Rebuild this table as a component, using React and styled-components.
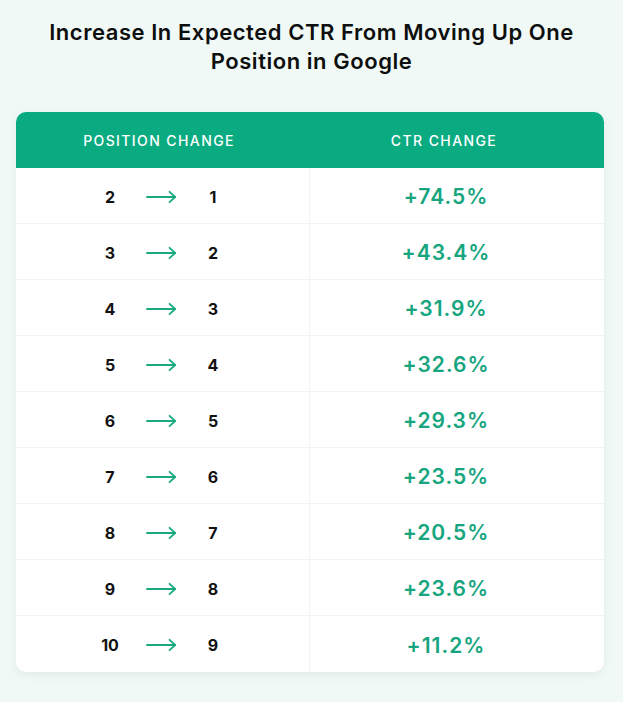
import React from 'react';
import styled, { createGlobalStyle } from 'styled-components';

const rows = [
  { from: 2, to: 1, ctr: '+74.5%' },
  { from: 3, to: 2, ctr: '+43.4%' },
  { from: 4, to: 3, ctr: '+31.9%' },
  { from: 5, to: 4, ctr: '+32.6%' },
  { from: 6, to: 5, ctr: '+29.3%' },
  { from: 7, to: 6, ctr: '+23.5%' },
  { from: 8, to: 7, ctr: '+20.5%' },
  { from: 9, to: 8, ctr: '+23.6%' },
  { from: 10, to: 9, ctr: '+11.2%' },
];

const Arrow = () => (
  <svg width="31" height="14" viewBox="0 0 31 14" fill="none">
    <path d="M1 7H29" stroke="#1aaa82" strokeWidth="1.8" strokeLinecap="round" />
    <path d="M23.5 1.8L29.2 7L23.5 12.2" stroke="#1aaa82" strokeWidth="1.8" strokeLinecap="round" strokeLinejoin="round" />
  </svg>
);

const App = () => {
  return (
    <>
      <GlobalStyle />
      <Page>
        <Title>
          Increase In Expected CTR From Moving Up One
          <br />
          Position in Google
        </Title>
        <Table>
          <HeaderRow>
            <HeaderCell shift={8}>Position Change</HeaderCell>
            <HeaderCell shift={26}>CTR Change</HeaderCell>
          </HeaderRow>
          {rows.map((row, i) => (
            <Row key={row.from} last={i === rows.length - 1}>
              <PositionCell>
                <Num>{row.from}</Num>
                <Arrow />
                <Num>{row.to}</Num>
              </PositionCell>
              <CtrCell>{row.ctr}</CtrCell>
            </Row>
          ))}
        </Table>
      </Page>
    </>
  );
};

export default App;

const GlobalStyle = createGlobalStyle`
  body {
    margin: 0;
    background: #f1f9f6;
    font-family: Inter, "Noto Sans", sans-serif;
  }
`;

const Page = styled.div`
  width: 623px;
  height: 702px;
  display: flex;
  flex-direction: column;
  align-items: center;
  padding-top: 18px;
  box-sizing: border-box;
`;

const Title = styled.h1`
  margin: 0;
  font-size: 22px;
  line-height: 29px;
  font-weight: 600;
  color: #0d0f0e;
  text-align: center;
  letter-spacing: 0.55px;
`;

const Table = styled.div`
  margin-top: 36px;
  align-self: flex-start;
  margin-left: 16px;
  width: 588px;
  background: #fff;
  border-radius: 10px;
  overflow: hidden;
  box-shadow: 0 3px 8px rgba(30, 80, 60, 0.08);
`;

const HeaderRow = styled.div`
  display: grid;
  grid-template-columns: 294px 294px;
  height: 56px;
  background: #0aab81;
`;

const HeaderCell = styled.div`
  display: flex;
  align-items: center;
  justify-content: center;
  padding-right: ${(p) => p.shift}px;
  padding-top: 1px;
  color: #fff;
  font-size: 14px;
  font-weight: 500;
  letter-spacing: 1.4px;
  text-transform: uppercase;
`;

const Row = styled.div`
  display: grid;
  grid-template-columns: 294px 294px;
  height: 56px;
  border-bottom: ${(p) => (p.last ? 'none' : '1px solid #f0f5f3')};
  box-sizing: border-box;
`;

const PositionCell = styled.div`
  display: grid;
  grid-template-columns: 40px 31px 40px;
  column-gap: 16px;
  justify-content: center;
  align-items: center;
  padding-right: 2px;
  padding-top: 2px;
  border-right: 1px solid #f0f5f3;
`;

const Num = styled.span`
  text-align: center;
  font-size: 16px;
  font-weight: 700;
  color: #111;
`;

const CtrCell = styled.div`
  display: flex;
  align-items: center;
  justify-content: center;
  padding-right: 22px;
  padding-top: 2px;
  font-size: 21px;
  font-weight: 600;
  color: #17a57f;
  letter-spacing: 1px;
`;
